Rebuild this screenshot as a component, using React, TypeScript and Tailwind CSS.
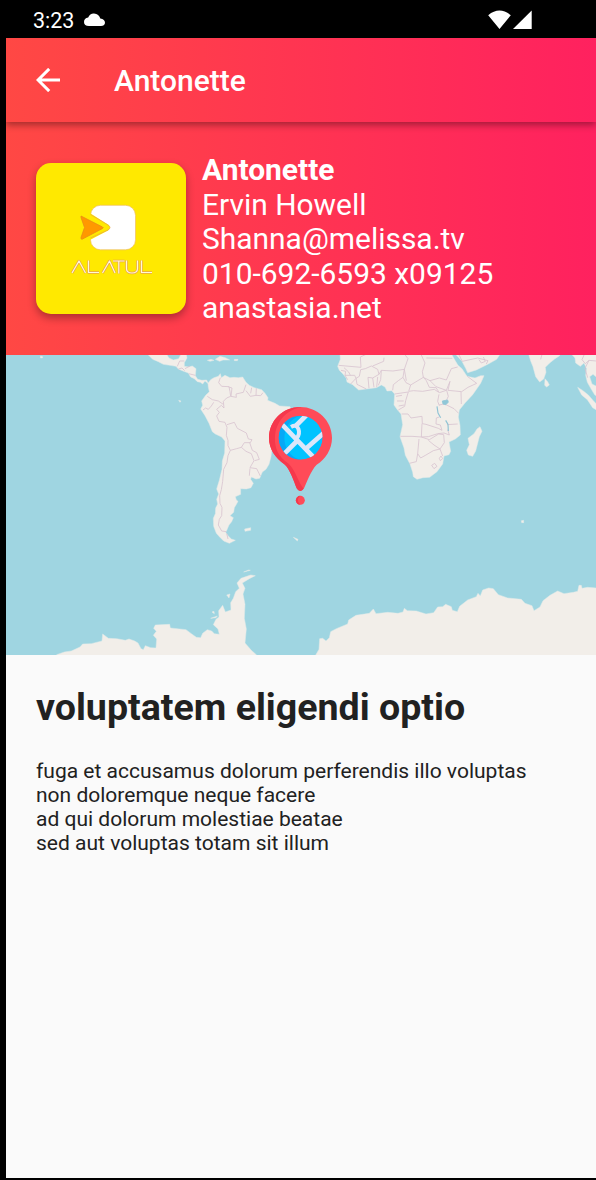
function WorldMap() {
  return (
    <svg viewBox="6 355 590 300" className="block h-full w-full" preserveAspectRatio="none">
      <rect x="6" y="354" width="590" height="302" fill="#9fd5e1" />
      <g transform="translate(0 345) scale(.33333)" fill="#f2eee9" stroke="#e2eae8" strokeWidth="1.5" strokeLinejoin="round">
        <path d="M443 28 L458 43 L475 50 L490 58 L510 61 L528 64 L535 72 L549 78 L565 84 L572 96 L583 101 L592 110 L601 112 L608 117 L615 108 L625 116 L620 105 L606 106 L593 103 L586 92 L588 71 L577 63 L566 66 L553 64 L553 53 L561 39 L559 28 L543 28 L536 41 L520 45 L507 39 L500 28Z" />
        <path d="M624 115 L632 104 L642 98 L655 94 L661 86 L664 98 L675 91 L690 98 L702 97 L715 98 L728 96 L738 112 L748 121 L763 128 L785 134 L795 145 L804 158 L803 166 L825 175 L839 183 L870 185 L880 207 L858 230 L845 264 L834 295 L815 318 L813 335 L807 358 L798 373 L787 381 L779 400 L768 402 L754 396 L752 403 L760 415 L753 428 L739 432 L722 431 L722 448 L706 455 L709 465 L714 469 L708 480 L703 488 L701 502 L690 512 L700 518 L695 530 L687 540 L681 554 L677 562 L684 572 L694 582 L706 586 L688 595 L671 588 L659 576 L649 565 L641 544 L640 520 L646 506 L647 489 L653 477 L650 463 L656 447 L650 432 L658 406 L666 373 L667 348 L674 324 L675 288 L665 276 L646 267 L637 260 L627 235 L615 212 L602 192 L608 181 L605 168 L617 151 L628 140 L625 127Z" />
        <path d="M622 46 L633 43 L642 46 L630 49Z M646 43 L660 34 L676 38 L689 45 L669 45 L659 49Z M703 43 L714 43 L712 47 L703 47Z M734 552 L752 548 L752 556 L735 559Z M880 577 L894 583 L892 588Z M122 33 L128 35 L127 39 L121 38Z M536 166 L543 168 L540 172Z" />
        <path d="M170 929 L193 921 L214 918 L240 906 L248 897 L274 896 L306 888 L308 867 L325 880 L350 881 L376 886 L387 882 L404 888 L414 894 L423 911 L430 914 L436 902 L452 908 L468 909 L470 882 L460 871 L469 859 L461 850 L466 840 L509 838 L511 849 L558 854 L574 866 L589 877 L602 878 L608 865 L622 854 L635 858 L643 866 L658 868 L654 852 L640 839 L648 823 L657 816 L656 797 L668 781 L676 801 L693 795 L692 773 L700 760 L707 740 L718 730 L711 714 L723 700 L752 690 L766 692 L748 701 L727 714 L735 730 L729 747 L735 778 L733 820 L739 852 L735 894 L754 916 L769 929 L769 940 L170 940Z M680 750 L690 747 L687 759Z M632 820 L652 813 L648 818Z M636 801 L642 799 L643 806Z M731 681 L746 675 L751 676Z" />
      </g>
      <g transform="translate(296 345) scale(.33333)" fill="#f2eee9" stroke="#e2eae8" strokeWidth="1.5" strokeLinejoin="round">
        <path d="M132 28 L133 43 L125 64 L130 76 L141 87 L151 100 L153 111 L170 119 L188 135 L211 132 L241 128 L256 120 L267 126 L273 138 L287 137 L296 147 L294 180 L304 194 L315 207 L320 239 L312 275 L324 309 L328 331 L342 357 L350 382 L352 395 L363 403 L381 398 L401 397 L423 380 L440 357 L444 333 L459 329 L464 319 L459 291 L478 282 L493 270 L492 241 L487 216 L490 195 L507 174 L530 149 L554 115 L564 92 L554 92 L537 99 L513 94 L498 71 L486 61 L473 39 L467 28Z" />
        <path d="M479 28 L498 49 L509 70 L515 83 L541 75 L577 57 L602 43 L612 28Z M698 28 L704 48 L711 65 L719 95 L731 111 L743 102 L750 82 L748 67 L761 54 L776 42 L791 32 L792 28Z M747 101 L755 110 L760 120 L752 126 L746 121Z M552 245 L558 259 L550 275 L539 318 L530 334 L517 330 L512 316 L520 299 L516 280 L534 266 L543 252Z" />
        <path d="M827 28 L837 39 L839 54 L853 64 L864 54 L872 71 L869 91 L874 112 L886 133 L897 151 L903 151 L902 124 L888 117 L881 95 L891 88 L903 98 L903 28Z M845 127 L861 137 L877 150 L890 165 L903 179 L903 196 L890 188 L874 164 L857 150Z M676 527 L683 526 L683 533 L677 533Z" />
        <path d="M58 932 L69 913 L71 881 L80 880 L90 888 L100 878 L104 860 L121 851 L155 837 L158 825 L180 811 L220 805 L232 792 L240 806 L275 802 L306 805 L321 801 L325 790 L334 797 L361 798 L390 807 L413 803 L425 786 L440 785 L449 778 L466 785 L469 796 L484 800 L491 784 L515 765 L541 755 L546 745 L553 753 L560 735 L578 729 L592 731 L607 749 L635 759 L676 763 L687 775 L708 782 L714 797 L732 786 L741 767 L762 751 L785 738 L804 746 L832 742 L845 739 L849 721 L856 721 L858 730 L875 727 L903 729 L903 940 L58 940Z" />
      </g>
      <g transform="translate(0 345) scale(.33333)" fill="none" stroke="#d8c4d0" strokeWidth="2.5" strokeLinejoin="round">
        <path d="M661 98 L656 113 L665 124 L687 125 L690 140 L692 154 L680 159 L670 169 L672 189 L664 181 L650 193 L658 202 L650 213 L657 229 L675 232 L681 247 L679 271 L684 286 L684 302 L691 316 L684 332 L681 353 L671 373 L668 409 L664 434 L659 452 L660 475 L666 487 L665 512 L658 523 L655 540 L665 558 L679 560 M686 126 L696 129 L693 154 L709 157 L708 147 L730 142 L738 119 M738 137 L751 154 L768 151 L782 152 L789 143 M755 128 L752 145 M769 130 L768 152 M622 154 L637 164 L655 168 L670 178 M609 195 L617 189 L625 193 L634 183 L641 172 M681 239 L703 232 L712 250 L739 264 L745 282 L756 284 L751 293 L733 293 L724 307 L710 311 L691 316 M724 307 L738 319 L754 326 L762 347 L750 368 L770 371 L781 393 M749 293 L757 316 L770 323 L778 343 L764 347 M750 370 L748 392 M532 64 L539 48 L553 48 M535 72 L546 69 L554 77 M555 71 L570 63 M566 86 L586 91 M680 565 L684 582" />
      </g>
      <g transform="translate(296 345) scale(.33333)" fill="none" stroke="#d8c4d0" strokeWidth="2.5" strokeLinejoin="round">
        <path d="M128 61 L195 67 L193 36 L210 28 M135 76 L149 79 L147 91 L176 91 L180 100 L164 117 M147 91 L155 104 M144 68 L158 81 L163 91 M180 100 L183 118 L211 132 M180 100 L190 94 L194 74 L208 71 L226 63 L245 73 L249 88 L230 99 L216 97 L219 130 M230 99 L234 127 M245 96 L242 127 M230 63 L263 49 L264 38 M249 88 L256 76 L291 78 L325 73 L336 41 L326 28 M256 76 L254 104 L247 121 M325 73 L321 97 L307 107 L292 119 L290 136 M375 28 L387 54 L379 80 L382 97 L344 120 L330 113 L321 97 M325 73 L331 107 M391 39 L469 40 M382 97 L402 107 L430 99 L451 105 L466 71 L485 66 M402 107 L420 125 L451 136 L462 109 L456 136 L497 140 L516 127 L542 115 L514 94 M382 97 L391 107 L400 127 L420 128 L430 143 L451 136 M344 120 L338 139 L353 137 L380 139 L415 133 L428 142 M296 147 L337 141 L329 167 L326 184 L307 195 M300 154 L318 151 M303 168 L323 168 M308 183 L325 180 M317 207 L336 207 L345 219 L378 214 L379 236 L390 238 L427 250 L438 256 L433 240 L420 237 L421 219 L430 216 M378 236 L376 276 L348 274 L313 274 M376 276 L397 275 L425 266 L444 264 L460 270 L455 254 M376 276 L400 284 L428 267 L443 269 L445 293 L432 312 L414 300 L397 286 M369 282 L365 326 L374 339 L390 330 L412 317 L432 312 L440 333 M365 326 L361 350 L340 355 M407 361 L416 355 L423 364 L414 371Z M430 340 L435 333 L440 341 L433 347Z M452 136 L457 154 L446 177 L474 191 L488 205 M495 140 L496 177 M446 177 L429 180 M429 148 L425 169 L430 182 M453 239 L485 237 M488 28 L499 49 L545 39 L576 47 L571 57 M549 44 L556 54 L568 49 L562 36 M865 28 L858 44 L868 56 L879 46 L900 48 M879 46 L867 70 L875 98 M738 28 L734 43" />
        <path d="M423 184 L426 204 L434 218 M449 226 L456 238 L457 258" stroke="#8fc3d4" strokeWidth="3.5" />
        <path d="M439 168 L455 165 L457 172 L449 179 L441 177Z" fill="#8fc7d7" stroke="#8fc7d7" />
      </g>
      <g transform="translate(255 395) scale(.33333)">
        <path d="M136 36 C84 36 42 77 42 129 C42 162 61 189 88 208 C105 222 117 260 125 280 Q136 296 147 280 C156 260 168 226 185 209 C212 193 231 162 231 129 C231 77 188 36 136 36Z" fill="#ff4b58" />
        <path d="M140 36 C84 33 42 77 42 129 C42 162 61 189 88 208 C105 222 117 260 125 280 Q134 296 146 281 C132 266 122 226 101 206 C70 185 59 161 60 129 C61 80 94 45 140 36Z" fill="#f5384c" />
        <clipPath id="pin-face"><circle cx="137" cy="128" r="66" /></clipPath>
        <g clipPath="url(#pin-face)">
          <circle cx="137" cy="128" r="66" fill="#00c3ff" />
          <path d="M137 62 C72 79 72 179 137 194 H60 V62Z" fill="#08a8f6" />
          <g fill="none" stroke="#dce7fa" strokeWidth="14">
            <path d="M78 85 L176 187 M154 61 L119 96 M129 135 L83 181 M206 114 L155 159" />
            <path d="M108 96 Q124 87 130 101 Q136 116 125 130" strokeWidth="12" />
          </g>
        </g>
        <circle cx="136" cy="316" r="13.5" fill="#ff4b58" />
        <path d="M136 302.5 A13.5 13.5 0 0 0 136 329.5 C126 320 127 310 136 302.5Z" fill="#f5384c" />
      </g>
    </svg>
  );
}

const wordmark =
  "M36 109.5 L43 97.5 L49.5 109.5 M52.5 97 V109 H63 M66.5 109.5 L73.5 97.5 L79 109.5 M77 97.5 H88.5 M82.8 97.5 V110 M90.5 97 V105 Q90.5 109.5 96 109.5 Q101.5 109.5 101.5 105 V97 M105.5 97 V109 H116";

function Logo() {
  return (
    <svg viewBox="0 0 150 150" className="h-full w-full">
      <rect x="54.5" y="41.8" width="45" height="44.5" rx="10" fill="#fff" stroke="#eebd65" strokeWidth=".7" />
      <path d="M53 49 L72 61 Q76 64 72 67 L53 77Z" fill="#ffe900" />
      <path d="M54.5 51 L72 61.5 Q76 64 72 66.5 L54.5 74.5" fill="none" stroke="#e6a447" strokeWidth=".7" />
      <path d="M45 52.5 L66.5 63.5 Q68 64.3 66.5 65 L46 75.8 Q44.8 76 45 74 L48.5 64 L45 54Z" fill="#ff9800" stroke="#e98c16" strokeWidth=".8" />
      <g fill="none" strokeLinejoin="round">
        <path d={wordmark} stroke="#e8a24c" strokeWidth="2.5" />
        <path d={wordmark} stroke="#fff8d8" strokeWidth="1.2" />
      </g>
    </svg>
  );
}

export default function App() {
  return (
    <div className="flex h-[1180px] w-[596px] flex-col overflow-hidden bg-black pb-[2px] pl-[6px] font-['Roboto',sans-serif]">
      <div className="flex h-[38px] shrink-0 items-center pl-[27px] text-white">
        <span className="mt-[4px] w-[51px] whitespace-nowrap text-[21.5px] leading-6">3:23</span>
        <svg className="mt-[1px] h-[14px] w-[21px]" viewBox="0 0 21 14">
          <path d="M5 13 Q0 13 0 9 Q0 5 4.2 4.5 Q6 .3 10 .5 Q15 .8 16.3 5.5 Q21 6 21 10 Q20.5 13 17 13Z" fill="white" />
        </svg>
        <svg className="ml-auto mr-[64px] mt-[1px] h-[20px] w-[44px]" viewBox="0 0 44 20">
          <path d="M.2 5.2 Q11.5 -4 22.8 5.2 L11.5 19Z M43.7 .5 V19 H25Z" fill="white" />
        </svg>
      </div>
      <main className="flex min-h-0 grow flex-col bg-[#fafafa]">
        <header className="relative flex h-[84px] shrink-0 items-center bg-[linear-gradient(to_right,#ff4844,#ff215f)] pl-[30px] text-white shadow-[0_3px_7px_rgba(0,0,0,.36)]">
          <svg className="h-[24px] w-[24px]" viewBox="0 0 24 24" fill="none" stroke="white" strokeWidth="3">
            <path d="M24 12 H2 M13.2 .9 L2.1 12 L13.2 23.1" />
          </svg>
          <h1 className="ml-[54px] mt-[2px] text-[30px] font-medium leading-9">Antonette</h1>
        </header>
        <section className="flex h-[233px] shrink-0 bg-[linear-gradient(to_right,#ff4844,#ff215f)] pl-[30px] pt-[31px] text-white">
          <div className="mt-[10px] h-[151px] w-[150px] shrink-0 overflow-hidden rounded-[15px] bg-[#ffe900] shadow-[0_4px_8px_rgba(0,0,0,.32)]"><Logo /></div>
          <div className="ml-4 whitespace-nowrap text-[29.95px] leading-[34.5px]">
            <h2 className="font-bold">Antonette</h2>
            <p>Ervin Howell</p>
            <p>Shanna@melissa.tv</p>
            <p>010-692-6593 x09125</p>
            <p>anastasia.net</p>
          </div>
        </section>
        <section className="h-[300px] shrink-0"><WorldMap /></section>
        <article className="pl-[30px] pt-[30px] text-[#212121]">
          <h2 className="whitespace-nowrap text-[37.55px] font-bold leading-[44px]">voluptatem eligendi optio</h2>
          <p className="mt-[30px] whitespace-pre-line text-[21.03px] leading-[24px]">{`fuga et accusamus dolorum perferendis illo voluptas
non doloremque neque facere
ad qui dolorum molestiae beatae
sed aut voluptas totam sit illum`}</p>
        </article>
      </main>
    </div>
  );
}
